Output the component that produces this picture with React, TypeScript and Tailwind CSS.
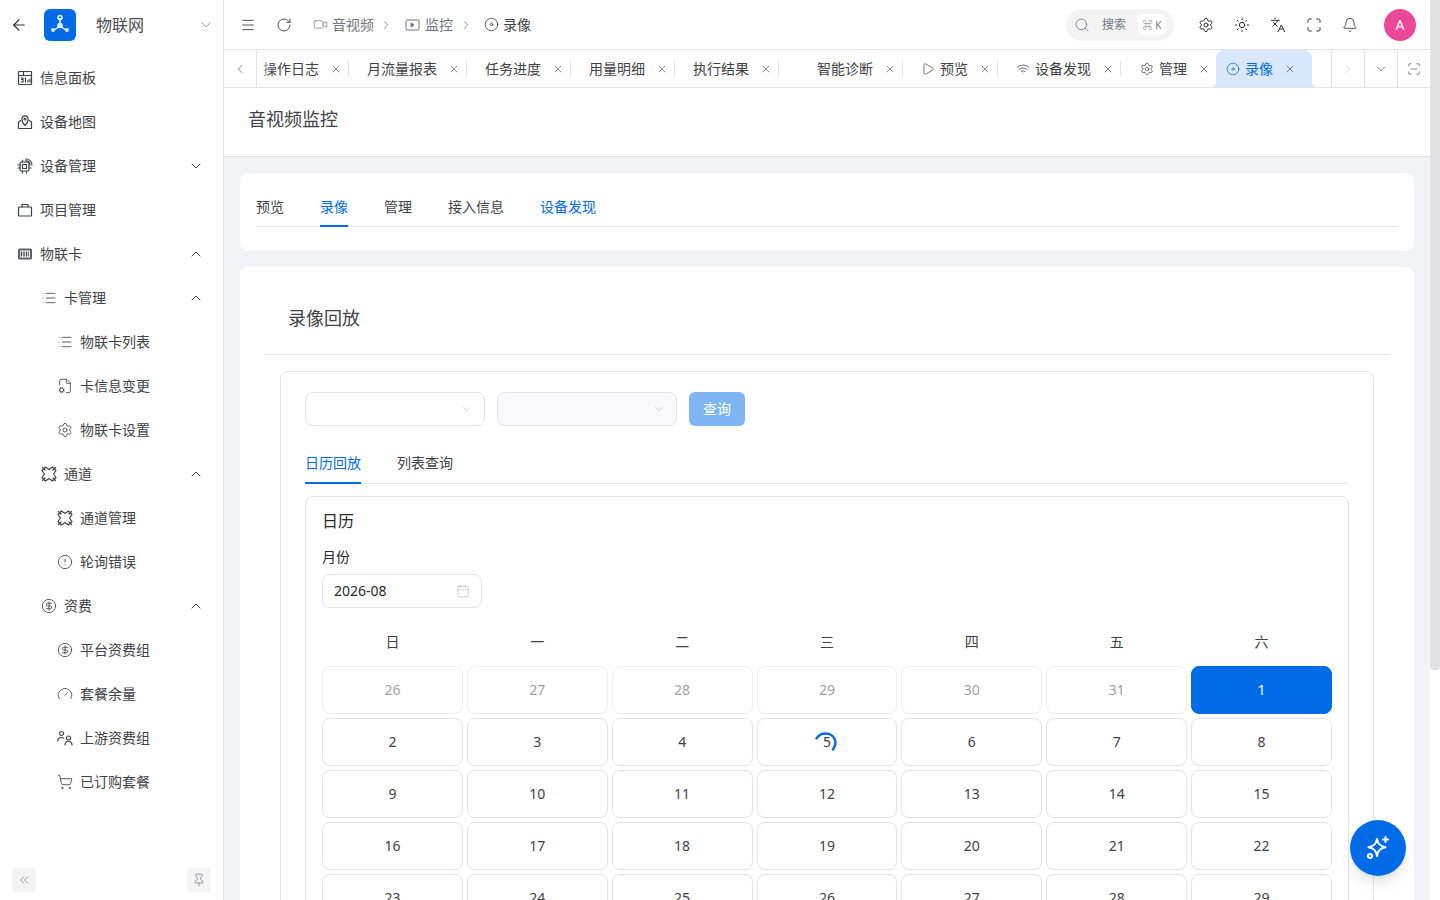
import React from 'react'
import {
  ArrowLeft, Bell, Calendar, ChevronDown, ChevronLeft, ChevronRight, ChevronUp, ChevronsLeft, CircleAlert,
  CircleDollarSign, Disc, FileCog, Gauge, Languages, List, Maximize, Menu, Pin, Play, RotateCw, ScanLine, Search,
  Settings, ShoppingCart, Sun, Video, Wifi, X,
} from 'lucide-react'

const stroke = {
  fill: 'none',
  stroke: 'currentColor',
  strokeWidth: 1.5,
  strokeLinecap: 'round' as const,
  strokeLinejoin: 'round' as const,
}

function DashIcon() {
  return (
    <svg width="16" height="16" viewBox="0 0 16 16" {...stroke} strokeWidth={1.2}>
      <rect x="1.5" y="1.5" width="13" height="13" rx="0.5" />
      <path d="M1.5 5.5h13M6.5 1.5v4M4 8h2v1.5H4.5M6 9.5V12H4M8.5 8v4M11 10v2M13 9v3" />
    </svg>
  )
}

function MapIcon() {
  return (
    <svg width="16" height="16" viewBox="0 0 16 16" {...stroke} strokeWidth={1.2}>
      <path d="M4 6.5L1.5 8v6.5h13V8L12 6.5" />
      <path d="M8 11.5C6 9.5 4.8 7.8 4.8 5a3.2 3.2 0 0 1 6.4 0c0 2.8-1.2 4.500-3.200 6.500z" />
      <circle cx="8" cy="5" r="1" />
    </svg>
  )
}

function ChipIcon() {
  return (
    <svg width="16" height="16" viewBox="0 0 16 16" {...stroke} strokeWidth={1.2}>
      <rect x="3" y="4" width="9" height="9" rx="1.5" />
      <rect x="5.500" y="6.500" width="4" height="4" />
      <path d="M1 7h2M1 10h2M12 10h2M5.500 2v2M5.500 13v2M9.500 13v2M8.500 1a6 6 0 0 1 6.500 6M8.500 3a4 4 0 0 1 4.500 4" />
    </svg>
  )
}

function CaseIcon() {
  return (
    <svg width="16" height="16" viewBox="0 0 16 16" {...stroke} strokeWidth={1.2}>
      <rect x="1.500" y="5" width="13" height="9" rx="0.5" />
      <path d="M5 5V2.500h6V5" />
    </svg>
  )
}

function SimIcon() {
  return (
    <svg width="16" height="16" viewBox="0 0 16 16">
      <rect x="1" y="2.500" width="14" height="11" rx="1.500" fill="#5f6368" />
      <rect x="3" y="4.500" width="10" height="7" fill="#fff" />
      <path d="M4.500 5.500v5M7 5.500v5M9.500 5.500v5" stroke="#4a4d52" strokeWidth="1.400" />
      <path d="M11.500 5.500v5" stroke="#4a4d52" strokeWidth="0.800" />
    </svg>
  )
}

function ChannelIcon() {
  return (
    <svg width="16" height="16" viewBox="0 0 16 16" {...stroke} strokeWidth={1.2}>
      <path d="M4.500 1L8 3.500 11.500 1 15 4.500 12.500 8 15 11.500 11.500 15 8 12.500 4.500 15 1 11.500 3.500 8 1 4.500z" />
      <path d="M1.500 1.500L4 4M14.500 1.500L12 4M1.500 14.500L4 12M14.500 14.500L12 12" strokeDasharray="1.500 1" />
    </svg>
  )
}

function UsersIcon() {
  return (
    <svg width="16" height="16" viewBox="0 0 16 16" {...stroke} strokeWidth={1.2}>
      <circle cx="4.500" cy="3.500" r="2" />
      <path d="M0.800 11c0-2.200 1.700-3.500 3.700-3.500 1 0 1.700.2 2.300.7" />
      <circle cx="11.500" cy="8" r="2" />
      <path d="M8 15c0-2 1.500-3.500 3.500-3.500S15 13 15 15" />
    </svg>
  )
}

function SparkIcon() {
  return (
    <svg width="26" height="26" viewBox="0 0 26 26" fill="none" stroke="#fff" strokeWidth="2" strokeLinecap="round" strokeLinejoin="round">
      <path d="M12 4c.8 4.800 2.800 7 8.500 8.200-5.700 1.300-7.700 3.500-8.500 8.800-.8-5.300-2.800-7.500-8.500-8.800C9.200 11 11.200 8.800 12 4z" />
      <path d="M20.500 2v5M18 4.500h5" />
      <circle cx="5" cy="21" r="2" />
    </svg>
  )
}

function LogoIcon() {
  return (
    <svg width="22" height="22" viewBox="0 0 22 22" fill="none">
      <path d="M11 4v6M11 12L5 16M11 12l6 4" stroke="#fff" strokeWidth="1.400" />
      <circle cx="11" cy="3.500" r="2" stroke="#fff" strokeWidth="1.400" />
      <circle cx="11" cy="11.500" r="2.800" fill="#dbeafe" />
      <circle cx="4" cy="16" r="2" fill="#dbeafe" />
      <circle cx="18" cy="16" r="2" fill="#dbeafe" />
    </svg>
  )
}

const lucideIcon = { size: 16, strokeWidth: 1.25 }

const menu = [
  { label: '信息面板', icon: <DashIcon />, pad: 'pl-[17px]' },
  { label: '设备地图', icon: <MapIcon />, pad: 'pl-[17px]' },
  { label: '设备管理', icon: <ChipIcon />, pad: 'pl-[17px]', arrow: 'down' },
  { label: '项目管理', icon: <CaseIcon />, pad: 'pl-[17px]' },
  { label: '物联卡', icon: <SimIcon />, pad: 'pl-[17px]', arrow: 'up' },
  { label: '卡管理', icon: <List {...lucideIcon} />, pad: 'pl-[41px]', arrow: 'up' },
  { label: '物联卡列表', icon: <List {...lucideIcon} />, pad: 'pl-[57px]' },
  { label: '卡信息变更', icon: <FileCog {...lucideIcon} />, pad: 'pl-[57px]' },
  { label: '物联卡设置', icon: <Settings {...lucideIcon} />, pad: 'pl-[57px]' },
  { label: '通道', icon: <ChannelIcon />, pad: 'pl-[41px]', arrow: 'up' },
  { label: '通道管理', icon: <ChannelIcon />, pad: 'pl-[57px]' },
  { label: '轮询错误', icon: <CircleAlert {...lucideIcon} />, pad: 'pl-[57px]' },
  { label: '资费', icon: <CircleDollarSign {...lucideIcon} />, pad: 'pl-[41px]', arrow: 'up' },
  { label: '平台资费组', icon: <CircleDollarSign {...lucideIcon} />, pad: 'pl-[57px]' },
  { label: '套餐余量', icon: <Gauge {...lucideIcon} />, pad: 'pl-[57px]' },
  { label: '上游资费组', icon: <UsersIcon />, pad: 'pl-[57px]' },
  { label: '已订购套餐', icon: <ShoppingCart {...lucideIcon} />, pad: 'pl-[57px]' },
]

const tabs = [
  { label: '操作日志', pad: 'pl-[6px]', icon: null },
  { label: '月流量报表', pad: 'pl-[18px]', icon: null },
  { label: '任务进度', pad: 'pl-[18px]', icon: null },
  { label: '用量明细', pad: 'pl-[18px]', icon: null },
  { label: '执行结果', pad: 'pl-[18px]', icon: null },
  { label: '智能诊断', pad: 'pl-[38px]', icon: null },
  { label: '预览', pad: 'pl-[18px]', icon: <Play size={14} strokeWidth={1.25} /> },
  { label: '设备发现', pad: 'pl-[18px]', icon: <Wifi size={14} strokeWidth={1.25} /> },
  { label: '管理', pad: 'pl-[19px]', icon: <Settings size={14} strokeWidth={1.25} /> },
]

const weekDays = ['日', '一', '二', '三', '四', '五', '六']
const days = [26, 27, 28, 29, 30, 31, 1, 2, 3, 4, 5, 6, 7, 8, 9, 10, 11, 12, 13, 14, 15, 16, 17, 18, 19, 20, 21, 22, 23, 24, 25, 26, 27, 28, 29]

function Sidebar() {
  return (
    <aside className="flex h-full w-[224px] shrink-0 flex-col border-r border-[#e4e4e7] bg-white text-[#3f4248]">
      <div className="flex h-[50px] items-center pl-[10px]">
        <ArrowLeft size={18} strokeWidth={1.5} className="text-[#333]" />
        <div className="ml-[16px] flex h-8 w-8 items-center justify-center rounded-md bg-[#006be6]">
          <LogoIcon />
        </div>
        <span className="ml-5 text-base text-[#4a4d52]">物联网</span>
        <ChevronDown size={16} strokeWidth={1.25} className="ml-auto mr-[9px] text-[#8a8d92]" />
      </div>
      <nav className="mt-[6px] flex flex-col">
        {menu.map((item) => (
          <div key={item.label} className={`flex h-[44px] items-center pr-[19px] text-sm ${item.pad}`}>
            <span className="flex w-4 justify-center">{item.icon}</span>
            <span className="ml-[7px]">{item.label}</span>
            {item.arrow === 'down' && <ChevronDown size={16} strokeWidth={1.5} className="ml-auto" />}
            {item.arrow === 'up' && <ChevronUp size={16} strokeWidth={1.5} className="ml-auto" />}
          </div>
        ))}
      </nav>
      <div className="mt-auto flex justify-between px-3 pb-2">
        <div className="flex h-6 w-6 items-center justify-center rounded bg-[#f4f4f5] text-[#71757a]">
          <ChevronsLeft size={14} strokeWidth={1.25} />
        </div>
        <div className="flex h-6 w-6 items-center justify-center rounded bg-[#f4f4f5] text-[#71757a]">
          <Pin size={14} strokeWidth={1.25} />
        </div>
      </div>
    </aside>
  )
}

function Header() {
  return (
    <header className="flex h-[50px] shrink-0 items-center border-b border-[#e4e4e7] bg-white pl-[16px] pr-[14px]">
      <Menu size={16} strokeWidth={1.5} className="text-[#555]" />
      <RotateCw size={16} strokeWidth={1.5} className="ml-[20px] text-[#555]" />
      <div className="ml-[21px] flex items-center text-sm text-[#71757f]">
        <Video size={15} strokeWidth={1.1} />
        <span className="ml-[4px]">音视频</span>
        <ChevronRight size={14} strokeWidth={1.25} className="ml-[5px]" />
        <Play size={0} className="hidden" />
        <svg width="15" height="14" viewBox="0 0 15 14" className="ml-[12px]" fill="none" stroke="currentColor">
          <rect x="1" y="2" width="13" height="10" rx="1" />
          <path d="M6 5l3 2-3 2z" fill="currentColor" />
        </svg>
        <span className="ml-[5px]">监控</span>
        <ChevronRight size={14} strokeWidth={1.25} className="ml-[6px]" />
        <Disc size={15} strokeWidth={1.25} className="ml-[11px] text-[#333]" />
        <span className="ml-[4px] text-[#3f4248]">录像</span>
      </div>
      <div className="ml-auto flex h-8 w-[108px] items-center rounded-full bg-[#f4f4f5] pl-[8px] text-[#71757f]">
        <Search size={16} strokeWidth={1.25} />
        <span className="ml-[12px] text-xs">搜索</span>
        <span className="ml-[12px] flex h-[21px] w-[28px] items-center justify-center rounded-md bg-white text-[10px] leading-none">⌘ K</span>
      </div>
      <div className="ml-[24px] flex items-center gap-[20px] text-[#333]">
        <Settings {...lucideIcon} strokeWidth={1.5} />
        <Sun {...lucideIcon} strokeWidth={1.5} />
        <Languages {...lucideIcon} strokeWidth={1.5} />
        <Maximize {...lucideIcon} strokeWidth={1.5} />
        <Bell {...lucideIcon} strokeWidth={1.25} />
      </div>
      <div className="ml-[26px] flex h-8 w-8 items-center justify-center rounded-full bg-[#ec4899] text-sm text-white">A</div>
    </header>
  )
}

function TabBar() {
  return (
    <div className="flex h-[38px] shrink-0 items-stretch border-b border-[#e4e4e7] bg-white text-sm text-[#3f4248]">
      <div className="flex w-[33px] shrink-0 items-center justify-center border-r border-[#e4e4e7] text-[#666]">
        <ChevronLeft size={14} strokeWidth={1.25} />
      </div>
      <div className="relative flex items-center">
        <div className="absolute left-0 top-0 h-full w-[14px] bg-gradient-to-r from-white to-transparent" />
        {tabs.map((tab) => (
          <div key={tab.label} className={`flex h-full items-center ${tab.pad}`}>
            {tab.icon && <span className="mr-[5px] flex w-[14px] justify-center">{tab.icon}</span>}
            <span>{tab.label}</span>
            <X size={12} strokeWidth={1.25} className="ml-[11px]" />
            <span className="ml-[6px] h-4 w-px bg-[#e4e4e7]" />
          </div>
        ))}
      </div>
      <div className="relative ml-[-1px] flex h-[37px] w-[96px] items-center self-end rounded-t-lg bg-[#d9e8fc] pl-[10px] text-[#006be6]">
        <svg width="5" height="5" viewBox="0 0 5 5" className="absolute bottom-0 left-[-5px]">
          <path d="M0 5Q5 5 5 0V5z" fill="#d9e8fc" />
        </svg>
        <svg width="5" height="5" viewBox="0 0 5 5" className="absolute bottom-0 right-[-5px]">
          <path d="M5 5Q0 5 0 0V5z" fill="#d9e8fc" />
        </svg>
        <Disc size={14} strokeWidth={1.25} />
        <span className="ml-[5px]">录像</span>
        <X size={12} strokeWidth={1.25} className="ml-[11px] text-[#333]" />
      </div>
      <div className="ml-auto flex">
        <div className="flex w-[33px] items-center justify-center border-l border-[#e4e4e7] text-[#c8c8cc]">
          <ChevronRight size={14} strokeWidth={1.25} />
        </div>
        <div className="flex w-[33px] items-center justify-center border-l border-[#e4e4e7] text-[#555]">
          <ChevronDown size={14} strokeWidth={1.25} />
        </div>
        <div className="flex w-[33px] items-center justify-center border-l border-[#e4e4e7] text-[#555]">
          <ScanLine size={14} strokeWidth={1.25} />
        </div>
      </div>
    </div>
  )
}

function SelectBox({ disabled }: { disabled?: boolean }) {
  return (
    <div className={`flex h-[34px] w-[180px] items-center justify-end rounded-lg border border-[#e4e4e7] pr-[10px] text-[#c4c4c8] ${disabled ? 'bg-[#f9f9fb]' : 'bg-white'}`}>
      <ChevronDown size={14} strokeWidth={1.25} />
    </div>
  )
}

function CalendarPanel() {
  return (
    <div className="mt-3 rounded-lg border border-[#e4e4e7] px-4 pt-[11px]">
      <h3 className="text-base leading-[26px] text-[#27292d]">日历</h3>
      <div className="mt-[12px] text-sm leading-[22px] text-[#27292d]">月份</div>
      <div className="mt-[6px] flex h-[34px] w-40 items-center justify-between rounded-lg border border-[#e4e4e7] px-[11px] text-sm text-[#27292d]">
        <span>2026-08</span>
        <Calendar size={14} strokeWidth={1} className="text-[#b4b4b8]" />
      </div>
      <div className="mt-[20px] grid grid-cols-7 gap-x-1 text-sm text-[#3f4248]">
        {weekDays.map((day) => (
          <div key={day} className="flex h-[36px] items-start justify-center leading-[28px]">{day}</div>
        ))}
      </div>
      <div className="mt-[2px] grid grid-cols-7 gap-1 text-sm">
        {days.map((day, i) => {
          const selected = i === 6
          const muted = i < 6
          return (
            <div
              key={i}
              className={`relative flex h-[48px] items-center justify-center rounded-lg border ${
                selected
                  ? 'border-[#006be6] bg-[#006be6] text-white'
                  : muted
                    ? 'border-[#efeff1] text-[#a1a1a6]'
                    : 'border-[#e4e4e7] text-[#3f4248]'
              }`}
            >
              {i === 10 && (
                <svg width="28" height="28" viewBox="0 0 28 28" className="absolute left-1/2 top-1/2 -translate-x-1/2 -translate-y-1/2" fill="none">
                  <path d="M2.500 10.500C5 6 9 5.500 12 5.500c5 0 9 3.500 9.500 8.500.3 3-1 5.500-2.500 7.500" stroke="#006be6" strokeWidth="2.400" strokeLinecap="round" transform="translate(1 0)" />
                </svg>
              )}
              <span className="relative">{day}</span>
            </div>
          )
        })}
      </div>
    </div>
  )
}

export default function App() {
  return (
    <div className="flex h-screen w-full overflow-hidden bg-[#f1f3f7] font-['Noto_Sans','Noto_Sans_CJK_SC',sans-serif]">
      <Sidebar />
      <main className="relative flex min-w-0 flex-1 flex-col overflow-hidden">
        <Header />
        <TabBar />
        <div className="flex h-[69px] shrink-0 items-center border-b border-[#e4e4e7] bg-white pb-[6px] pl-6 text-lg text-[#3f4248]">音视频监控</div>
        <div className="flex flex-col gap-4 px-4 pt-4">
          <section className="h-[78px] rounded-lg bg-white px-4 pt-[16px]">
            <div className="flex h-[38px] gap-9 border-b border-[#e4e4e7] text-sm leading-[36px] text-[#3f4248]">
              <span>预览</span>
              <span className="h-[38px] border-b-2 border-[#006be6] text-[#006be6]">录像</span>
              <span>管理</span>
              <span>接入信息</span>
              <span className="text-[#006be6]">设备发现</span>
            </div>
          </section>
          <section className="rounded-lg bg-white px-6">
            <h2 className="flex h-[88px] items-center border-b border-[#e4e4e7] pl-6 pt-[14px] text-lg text-[#3f4248]">录像回放</h2>
            <div className="mx-4 mt-4 rounded-lg border border-[#e4e4e7] px-6 pt-5">
              <div className="flex gap-3">
                <SelectBox />
                <SelectBox disabled />
                <div className="flex h-[34px] w-14 items-center justify-center rounded-md bg-[#80b5f3] text-sm text-white">查询</div>
              </div>
              <div className="mt-[20px] flex h-[38px] gap-9 border-b border-[#e4e4e7] text-sm leading-[34px] text-[#3f4248]">
                <span className="h-[38px] border-b-2 border-[#006be6] text-[#006be6]">日历回放</span>
                <span>列表查询</span>
              </div>
              <CalendarPanel />
            </div>
          </section>
        </div>
        <button className="absolute left-[1126px] top-[820px] flex h-14 w-14 items-center justify-center rounded-full bg-[#006be6] shadow-lg">
          <SparkIcon />
        </button>
      </main>
      <div className="h-full w-[10px] shrink-0 bg-white">
        <div className="h-[670px] w-full rounded-b bg-[#e2e2e5]" />
      </div>
    </div>
  )
}
